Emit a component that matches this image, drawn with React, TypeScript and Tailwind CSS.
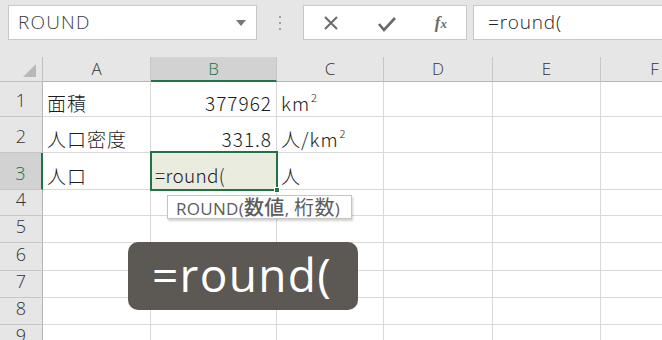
import React from 'react';

const cols = [
  { key: 'A', w: 108 },
  { key: 'B', w: 126 },
  { key: 'C', w: 107 },
  { key: 'D', w: 109 },
  { key: 'E', w: 108 },
  { key: 'F', w: 108 },
];

const rowHeights = [35, 36, 37, 26, 27, 28, 27, 27, 27];

type CellMap = Record<string, React.ReactNode>;

const Sup = () => <span className="inline-block text-[11px] -translate-y-[9px] ml-[1px]">2</span>;

const cells: CellMap = {
  A1: '面積',
  B1: '377962',
  C1: (
    <span>
      km<Sup />
    </span>
  ),
  A2: '人口密度',
  B2: '331.8',
  C2: (
    <span>
      人/km<Sup />
    </span>
  ),
  A3: '人口',
  C3: '人',
};

const rightAligned = new Set(['B1', 'B2']);

function Toolbar() {
  return (
    <div className="h-[57px] bg-[#e6e6e6] flex items-start pt-[5px] pl-[8px] gap-0">
      {/* Name box */}
      <div className="w-[249px] h-[35px] bg-white border border-[#c8c8c8] flex items-center justify-between pl-[9px] pr-[10px]">
        <span className="text-[19px] text-[#3c3c3c] font-['Open_Sans',sans-serif] font-light tracking-[1.2px]">ROUND</span>
        <svg width="10" height="6" viewBox="0 0 10 6">
          <path d="M0 0 L10 0 L5 6 Z" fill="#777" />
        </svg>
      </div>
      {/* Separator dots */}
      <div className="w-[46px] h-[35px] flex flex-col items-center justify-center gap-[4px]">
        <span className="w-[2px] h-[2px] bg-[#a0a0a0]" />
        <span className="w-[2px] h-[2px] bg-[#a0a0a0]" />
        <span className="w-[2px] h-[2px] bg-[#a0a0a0]" />
      </div>
      {/* Cancel / Enter / fx */}
      <div className="w-[164px] h-[35px] bg-white border border-[#c8c8c8] flex items-center justify-between pl-[19px] pr-[19px]">
        <svg width="16" height="16" viewBox="0 0 16 16">
          <path d="M2 2 L14 14 M14 2 L2 14" stroke="#6a6a6a" strokeWidth="2" />
        </svg>
        <svg width="18" height="16" viewBox="0 0 18 16" className="mt-[2px]">
          <path d="M1 8 L6 14 L17 2" stroke="#6a6a6a" strokeWidth="2.6" fill="none" />
        </svg>
        <span className="text-[17px] italic text-[#6a6a6a] font-['Liberation_Serif',serif] font-bold">
          f<span className="text-[13px]">x</span>
        </span>
      </div>
      {/* Formula input */}
      <div className="ml-[6px] flex-1 h-[35px] bg-white border border-[#c8c8c8] border-r-0 flex items-center pl-[14px]">
        <span className="text-[19px] text-[#222] font-['Open_Sans',sans-serif] font-light tracking-[0.8px]">=round(</span>
      </div>
    </div>
  );
}

function HeaderRow() {
  return (
    <div className="flex h-[25px] bg-[#e6e6e6]">
      <div className="w-[43px] shrink-0 border-r border-b border-[#c0c0c0] bg-[#e6e6e6] flex items-end justify-end pr-[6px] pb-[4px]">
        <svg width="13" height="13" viewBox="0 0 13 13">
          <path d="M13 0 L13 13 L0 13 Z" fill="#b8b8b8" />
        </svg>
      </div>
      {cols.map((c) => {
        const sel = c.key === 'B';
        return (
          <div
            key={c.key}
            style={{ width: c.w }}
            className={`shrink-0 flex items-center justify-center border-r border-[#c6c6c6] text-[17px] font-['Open_Sans',sans-serif] font-light ${
              sel ? 'bg-[#d2d2d2] border-b-2 border-b-[#217346] text-[#217346]' : 'border-b border-b-[#b4b4b4] text-[#333]'
            }`}
          >
            {c.key}
          </div>
        );
      })}
    </div>
  );
}

function GridRow({ n, h }: { n: number; h: number }) {
  const selRow = n === 3;
  return (
    <div className="flex" style={{ height: h }}>
      <div
        className={`w-[43px] shrink-0 flex items-end justify-center pb-[2px] border-b border-[#c6c6c6] text-[18px] font-['Open_Sans',sans-serif] font-light ${
          selRow ? 'bg-[#d2d2d2] border-r-2 border-r-[#217346] text-[#217346]' : 'bg-[#e6e6e6] border-r border-r-[#b4b4b4] text-[#333]'
        }`}
      >
        {n}
      </div>
      {cols.map((c) => {
        const id = `${c.key}${n}`;
        const right = rightAligned.has(id);
        return (
          <div
            key={id}
            style={{ width: c.w }}
            className={`shrink-0 relative flex items-end pb-[4px] border-r border-b border-[#d9d9d9] text-[19px] tracking-[1px] text-[#1c1c1c] font-['Noto_Sans_CJK_JP','Noto_Sans',sans-serif] font-light leading-none whitespace-nowrap ${
              right ? 'justify-end pr-[4px]' : 'justify-start pl-[4px]'
            }`}
          >
            {cells[id]}
          </div>
        );
      })}
    </div>
  );
}

export default function App() {
  return (
    <div className="w-[662px] h-[340px] overflow-hidden bg-white relative select-none">
      <Toolbar />
      <HeaderRow />
      {rowHeights.map((h, i) => (
        <GridRow key={i} n={i + 1} h={h} />
      ))}

      {/* Active cell B3 in edit mode */}
      <div className="absolute left-[150px] top-[151px] w-[128px] h-[40px] border-2 border-[#217346] bg-[#e9ecdf] flex items-end pb-[5px] pl-[3px]">
        <span className="text-[19px] text-[#1c1c1c] font-['Noto_Sans_CJK_JP',sans-serif] font-light tracking-[0.3px] leading-none">=round(</span>
        <span className="absolute -right-[4px] -bottom-[4px] w-[6px] h-[6px] bg-[#217346] border border-white" />
      </div>

      {/* Function tooltip */}
      <div className="absolute left-[167px] top-[195px] w-[185px] h-[24px] bg-white border border-[#c4c4c4] shadow-[1px_2px_2px_rgba(0,0,0,0.18)] flex items-center pl-[8px]">
        <span className="text-[17px] text-[#5c5c5c] font-['Open_Sans','Noto_Sans_CJK_JP',sans-serif] tracking-[0.3px] whitespace-nowrap leading-none">
          ROUND(<span className="text-[20px] font-['Noto_Sans_CJK_JP',sans-serif] font-medium">数値</span>,{' '}
          <span className="text-[20px] font-['Noto_Sans_CJK_JP',sans-serif]">桁数</span>)
        </span>
      </div>

      {/* Caption overlay */}
      <div className="absolute left-[128px] top-[242px] w-[230px] h-[68px] rounded-[10px] bg-[#5c5854] flex items-center pl-[24px]">
        <span className="text-[46px] text-white font-['Open_Sans',sans-serif] leading-none tracking-[1.3px] -mt-[4px]">=round(</span>
      </div>
    </div>
  );
}
